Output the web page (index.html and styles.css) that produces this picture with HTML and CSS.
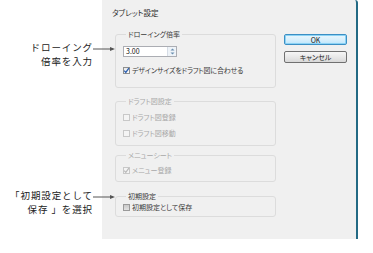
FILE: index.html
```html
<!DOCTYPE html>
<html lang="ja">
<head>
<meta charset="utf-8">
<link rel="stylesheet" href="styles.css">
</head>
<body>
<div class="page">
  <div class="notes">
    <div class="note note-1">
      <div class="note-text">ドローイング<br>倍率を入力</div>
      <svg class="arrow" width="23" height="6" viewBox="0 0 23 6"><line x1="0" y1="3" x2="20" y2="3" stroke="#555" stroke-width="1"/><path d="M17 1 L22 3 L17 5 Z" fill="#555"/></svg>
    </div>
    <div class="note note-2">
      <div class="note-text">「初期設定として<br>保存 」を選択</div>
      <svg class="arrow" width="23" height="6" viewBox="0 0 23 6"><line x1="0" y1="3" x2="20" y2="3" stroke="#555" stroke-width="1"/><path d="M17 1 L22 3 L17 5 Z" fill="#555"/></svg>
    </div>
  </div>
  <div class="dialog">
    <div class="title">タブレット設定</div>
    <div class="content">
      <div class="groups">
        <fieldset class="group g1">
          <legend>ドローイング倍率</legend>
          <div class="input">
            <span class="value">3.00</span>
            <span class="spin">
              <svg width="7" height="9" viewBox="0 0 7 9"><path d="M3.5 1.5 L5.5 3.5 L1.5 3.5 Z" fill="#6a8fb0"/><path d="M3.5 7.5 L5.5 5.5 L1.5 5.5 Z" fill="#6a8fb0"/></svg>
            </span>
          </div>
          <div class="check-row row-gap">
            <span class="box checked"><svg width="7" height="7" viewBox="0 0 7 7"><path d="M1.2 3.6 L2.8 5.4 L5.9 1.2" fill="none" stroke="#2a5fb0" stroke-width="1.3"/></svg></span>
            <span class="label label-long">デザインサイズをドラフト図に合わせる</span>
          </div>
        </fieldset>
        <fieldset class="group g2 disabled">
          <legend>ドラフト図設定</legend>
          <div class="check-row">
            <span class="box"></span>
            <span class="label">ドラフト図登録</span>
          </div>
          <div class="check-row row-gap2">
            <span class="box"></span>
            <span class="label">ドラフト図移動</span>
          </div>
        </fieldset>
        <fieldset class="group g3 disabled">
          <legend>メニューシート</legend>
          <div class="check-row">
            <span class="box checked"><svg width="7" height="7" viewBox="0 0 7 7"><path d="M1.2 3.6 L2.8 5.4 L5.9 1.2" fill="none" stroke="#b8b8b8" stroke-width="1.2"/></svg></span>
            <span class="label">メニュー登録</span>
          </div>
        </fieldset>
        <fieldset class="group g4">
          <legend>初期設定</legend>
          <div class="check-row">
            <span class="box hover"></span>
            <span class="label">初期設定として保存</span>
          </div>
        </fieldset>
      </div>
      <div class="buttons">
        <div class="btn btn-default">OK</div>
        <div class="btn">キャンセル</div>
      </div>
    </div>
  </div>
</div>
</body>
</html>
```
FILE: styles.css
```css
html, body {
  margin: 0;
  padding: 0;
  background: #ffffff;
}
body {
  width: 373px;
  height: 253px;
  overflow: hidden;
  font-family: "Noto Sans CJK JP", "Noto Sans", sans-serif;
}
.page {
  display: flex;
  align-items: flex-start;
}
.notes {
  width: 102px;
  flex: none;
}
.note {
  display: flex;
  justify-content: flex-end;
  align-items: flex-start;
}
.note-text {
  text-align: right;
  font-size: 9.5px;
  letter-spacing: 0.9px;
  color: #222;
  white-space: nowrap;
}
.note-1 {
  margin-top: 40px;
}
.note-1 .note-text {
  line-height: 14px;
}
.note-1 .arrow {
  margin-top: 6px;
}
.note-2 {
  margin-top: 121px;
}
.note-2 .note-text {
  line-height: 13.5px;
}
.note-2 .arrow {
  margin-top: 5px;
}
.arrow {
  flex: none;
  margin-right: -14px;
  position: relative;
  z-index: 1;
}
.dialog {
  width: 254px;
  height: 239px;
  flex: none;
  background: #f0f0f0;
  border-right: 2px solid #236a84;
  border-top-right-radius: 3px;
  box-sizing: content-box;
  font-size: 7px;
  font-feature-settings: "palt";
  color: #3a3a3a;
}
.title {
  margin: 8px 0 0 10px;
  line-height: 10px;
  font-size: 7.5px;
  color: #2a2a2a;
}
.content {
  display: flex;
  margin: 12px 0 0 13px;
  gap: 8px;
}
.groups {
  width: 161px;
  display: flex;
  flex-direction: column;
}
.group {
  margin: 0;
  border: 1px solid #dcdcdc;
  border-radius: 3px;
  min-width: 0;
  padding: 8px 7px 8px 7px;
  box-sizing: border-box;
}
.group legend {
  padding: 0 2px;
  margin-left: 3px;
  line-height: 8px;
  font-size: 7px;
}
.g1 {
  padding-bottom: 13px;
}
.g2 {
  margin-top: 9px;
}
.g3 {
  margin-top: 5px;
  padding-top: 7px;
  padding-bottom: 7px;
}
.g4 {
  margin-top: 10px;
  padding-top: 3px;
  padding-bottom: 5px;
}
.disabled, .disabled legend {
  color: #a8a8a8;
}
.input {
  width: 54px;
  height: 11px;
  box-sizing: border-box;
  border: 1px solid #abadb3;
  background: #fff;
  display: flex;
  align-items: center;
  justify-content: space-between;
}
.value {
  padding-left: 2px;
  line-height: 9px;
  font-size: 7px;
  color: #111;
}
.spin {
  width: 8px;
  height: 9px;
  display: flex;
  align-items: center;
  justify-content: center;
  background: #eef3f8;
  border-left: 1px solid #d6dde6;
}
.spin svg {
  display: block;
}
.check-row {
  display: flex;
  align-items: center;
  height: 8px;
  gap: 2px;
}
.row-gap {
  margin-top: 9px;
}
.row-gap2 {
  margin-top: 8px;
}
.box {
  width: 7px;
  height: 7px;
  box-sizing: border-box;
  border: 1px solid #8e8f8f;
  background: linear-gradient(#e9e9e9, #fbfbfb);
  display: flex;
  align-items: center;
  justify-content: center;
  flex: none;
}
.box svg {
  display: block;
  margin: -1px;
}
.disabled .box {
  border-color: #c8c8c8;
  background: #f4f4f4;
}
.box.hover {
  background: linear-gradient(#c9c9c9, #e2e2e2);
  border-color: #9a9a9a;
}
.label {
  white-space: nowrap;
  line-height: 8px;
}
.label-long {
  letter-spacing: -0.2px;
}
.buttons {
  width: 63px;
  display: flex;
  flex-direction: column;
  padding-top: 4px;
}
.btn {
  height: 12px;
  box-sizing: border-box;
  border: 1px solid #707070;
  border-radius: 2px;
  background: linear-gradient(#f6f6f6 0%, #e8e8e8 50%, #d8d8d8 100%);
  display: flex;
  align-items: center;
  justify-content: center;
  font-size: 7px;
  line-height: 8px;
  color: #222;
}
.btn-default {
  border-color: #3c8fc4;
  background: linear-gradient(#eaf6fd 0%, #d9f0fc 50%, #bee6fd 100%);
  box-shadow: inset 0 0 0 1px #8cd3f5;
  height: 11px;
  margin-bottom: 6px;
}
```
